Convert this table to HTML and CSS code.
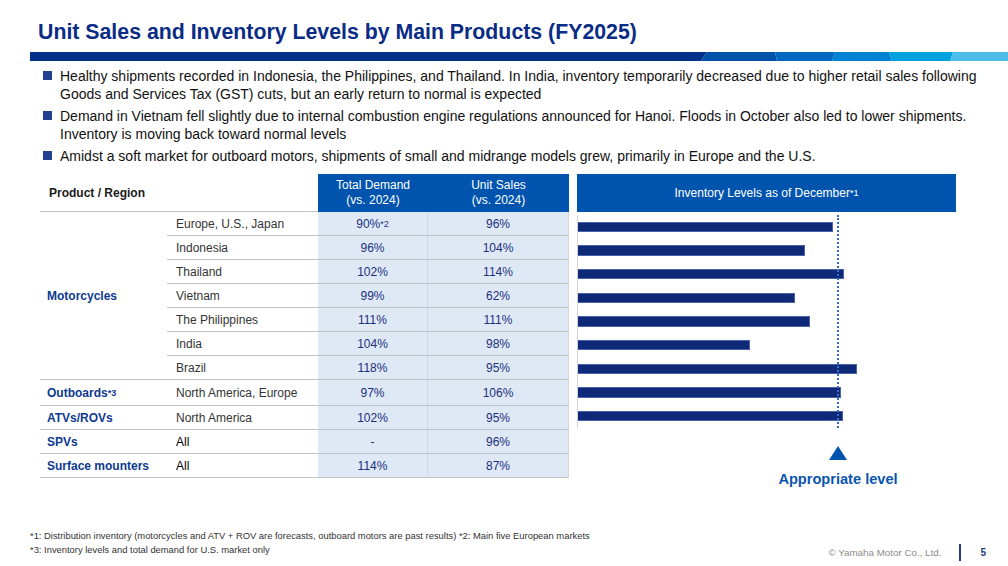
FILE: index.html
```html
<!DOCTYPE html>
<html lang="en">
<head>
<meta charset="utf-8">
<title>Unit Sales and Inventory Levels by Main Products (FY2025)</title>
<link rel="stylesheet" href="styles.css">
</head>
<body>
<div class="slide">
  <header class="head">
    <h1 class="title">Unit Sales and Inventory Levels by Main Products (FY2025)</h1>
    <svg class="rule" width="978" height="9" viewBox="0 0 978 9" aria-hidden="true">
      <polygon points="0,0 677,0 671,9 0,9" fill="#00318a"/>
      <polygon points="677,0 745,0 747,9 671,9" fill="#0051a9"/>
      <polygon points="745,0 805,0 802,9 747,9" fill="#0068c0"/>
      <polygon points="805,0 859,0 862,9 802,9" fill="#0082d4"/>
      <polygon points="859,0 923,0 920,9 862,9" fill="#00a1df"/>
      <polygon points="923,0 978,0 978,9 920,9" fill="#4bbde8"/>
    </svg>
  </header>

  <ul class="points">
    <li>Healthy shipments recorded in Indonesia, the Philippines, and Thailand. In India, inventory temporarily decreased due to higher retail sales following Goods and Services Tax (GST) cuts, but an early return to normal is expected</li>
    <li>Demand in Vietnam fell slightly due to internal combustion engine regulations announced for Hanoi. Floods in October also led to lower shipments. Inventory is moving back toward normal levels</li>
    <li>Amidst a soft market for outboard motors, shipments of small and midrange models grew, primarily in Europe and the U.S.</li>
  </ul>

  <section class="main">
    <div class="grid" role="table">
      <div class="c h-left" role="columnheader">Product / Region</div>
      <div class="c h-blue" role="columnheader">Total Demand<br>(vs. 2024)</div>
      <div class="c h-blue h-last" role="columnheader">Unit Sales<br>(vs. 2024)</div>

      <div class="c prod moto">Motorcycles</div>
      <div class="c region">Europe, U.S., Japan</div>
      <div class="c val">90%<sup>*2</sup></div>
      <div class="c val v-last">96%</div>

      <div class="c region">Indonesia</div>
      <div class="c val">96%</div>
      <div class="c val v-last">104%</div>

      <div class="c region">Thailand</div>
      <div class="c val">102%</div>
      <div class="c val v-last">114%</div>

      <div class="c region">Vietnam</div>
      <div class="c val">99%</div>
      <div class="c val v-last">62%</div>

      <div class="c region">The Philippines</div>
      <div class="c val">111%</div>
      <div class="c val v-last">111%</div>

      <div class="c region">India</div>
      <div class="c val">104%</div>
      <div class="c val v-last">98%</div>

      <div class="c region">Brazil</div>
      <div class="c val">118%</div>
      <div class="c val v-last">95%</div>

      <div class="c prod">Outboards<sup>*3</sup></div>
      <div class="c region">North America, Europe</div>
      <div class="c val">97%</div>
      <div class="c val v-last">106%</div>

      <div class="c prod">ATVs/ROVs</div>
      <div class="c region">North America</div>
      <div class="c val">102%</div>
      <div class="c val v-last">95%</div>

      <div class="c prod">SPVs</div>
      <div class="c region dark">All</div>
      <div class="c val">-</div>
      <div class="c val v-last">96%</div>

      <div class="c prod">Surface mounters</div>
      <div class="c region dark">All</div>
      <div class="c val">114%</div>
      <div class="c val v-last">87%</div>
    </div>

    <div class="chart">
      <div class="chart-head">Inventory Levels as of December<sup>*1</sup></div>
      <div class="chart-body">
        <div class="bars">
          <div class="bar" style="width:255px"></div>
          <div class="bar" style="width:227px"></div>
          <div class="bar" style="width:266px"></div>
          <div class="bar" style="width:217px"></div>
          <div class="bar" style="width:232px"></div>
          <div class="bar" style="width:172px"></div>
          <div class="bar" style="width:279px"></div>
          <div class="bar" style="width:263px"></div>
          <div class="bar" style="width:265px"></div>
        </div>
        <div class="target"></div>
      </div>
      <div class="marker">
        <div class="tri"></div>
        <div class="marker-label">Appropriate level</div>
      </div>
    </div>
  </section>

  <footer class="foot">
    <div class="notes">
      <p>*1: Distribution inventory (motorcycles and ATV + ROV are forecasts, outboard motors are past results) *2: Main five European markets</p>
      <p>*3: Inventory levels and total demand for U.S. market only</p>
    </div>
    <div class="brand">
      <span class="copy">© Yamaha Motor Co., Ltd.</span>
      <span class="sep"></span>
      <span class="page">5</span>
    </div>
  </footer>
</div>
</body>
</html>
```

FILE: styles.css
```css
html, body {
  margin: 0;
  padding: 0;
  background: #ffffff;
}

body {
  font-family: "Liberation Sans", Arial, sans-serif;
  color: #111111;
}

.slide {
  width: 1008px;
  height: 566px;
  display: flex;
  flex-direction: column;
  overflow: hidden;
}

.head {
  padding-top: 20px;
}

.title {
  margin: 0 0 0 38px;
  font-size: 21.3px;
  line-height: 24px;
  font-weight: 700;
  color: #0a2c85;
}

.rule {
  display: block;
  margin: 8px 0 0 30px;
}

.points {
  list-style: none;
  margin: 6px 0 0 0;
  padding: 0 20px 0 43px;
}

.points li {
  display: flex;
  gap: 8px;
  font-size: 14px;
  line-height: 18px;
  color: #111111;
  margin-bottom: 4px;
}

.points li::before {
  content: "";
  flex: none;
  width: 9px;
  height: 9px;
  margin-top: 4px;
  background: #21408f;
}

.main {
  display: flex;
  gap: 8px;
  margin-top: 5px;
  padding-left: 40px;
}

.grid {
  display: grid;
  grid-template-columns: 127px 151px 110px 141px;
  grid-template-rows: 38px repeat(7, 24px) 26px repeat(3, 24px);
  font-size: 12px;
}

.c {
  box-sizing: border-box;
  display: flex;
  align-items: center;
  border-bottom: 1px solid #c2c2c2;
}

.h-left {
  grid-column: span 2;
  padding-left: 9px;
  font-weight: 700;
  color: #1a1a1a;
}

.h-blue {
  justify-content: center;
  text-align: center;
  background: #0054ae;
  color: #ffffff;
  line-height: 15px;
  border-bottom: none;
}

.prod {
  padding-left: 7px;
  font-weight: 700;
  color: #0d3a8f;
}

.moto {
  grid-row: span 7;
}

.region {
  padding-left: 9px;
  color: #333333;
}

.region.dark {
  color: #000000;
}

.val {
  justify-content: center;
  background: #dfe9f5;
  color: #1b2f7f;
  border-right: 1px solid #c8d8ee;
}

.val.v-last {
  border-right: 1px solid #d6d6d6;
}

sup {
  font-size: 9px;
  line-height: 0;
  vertical-align: 5px;
}

.chart {
  width: 379px;
  display: flex;
  flex-direction: column;
}

.chart-head {
  height: 38px;
  display: flex;
  align-items: center;
  justify-content: center;
  background: #0054ae;
  color: #ffffff;
  font-size: 12px;
}

.chart-body {
  position: relative;
  margin-top: 3px;
  height: 213px;
  box-sizing: border-box;
  border-left: 1px solid #d4d4d4;
  padding-top: 6.7px;
}

.bars {
  display: flex;
  flex-direction: column;
  gap: 13.15px;
}

.bar {
  box-sizing: border-box;
  height: 10.5px;
  background: #0e2977;
  border: 1px solid #4a62a6;
  border-left: none;
}

.target {
  position: absolute;
  left: 259px;
  top: 0;
  bottom: 0;
  border-left: 2px dotted #2e6fcc;
}

.marker {
  width: 140px;
  margin: 18px 0 0 191px;
  display: flex;
  flex-direction: column;
  align-items: center;
}

.tri {
  width: 0;
  height: 0;
  border-left: 9.5px solid transparent;
  border-right: 9.5px solid transparent;
  border-bottom: 14px solid #0054ae;
}

.marker-label {
  margin-top: 11px;
  font-size: 14.6px;
  line-height: 16px;
  font-weight: 700;
  color: #0a55b0;
  white-space: nowrap;
}

.foot {
  margin-top: auto;
  display: flex;
  justify-content: space-between;
  align-items: flex-end;
  padding: 0 22px 5px 30px;
}

.notes {
  padding-bottom: 4px;
}

.notes p {
  margin: 0;
  font-size: 9.4px;
  line-height: 14px;
  color: #333333;
}

.brand {
  display: flex;
  align-items: center;
  height: 17px;
}

.copy {
  font-size: 9.8px;
  color: #8c8c8c;
}

.sep {
  width: 2px;
  height: 17px;
  background: #1f3a86;
  margin: 0 19px 0 18px;
}

.page {
  font-size: 10px;
  font-weight: 700;
  color: #1f3a86;
}
```
